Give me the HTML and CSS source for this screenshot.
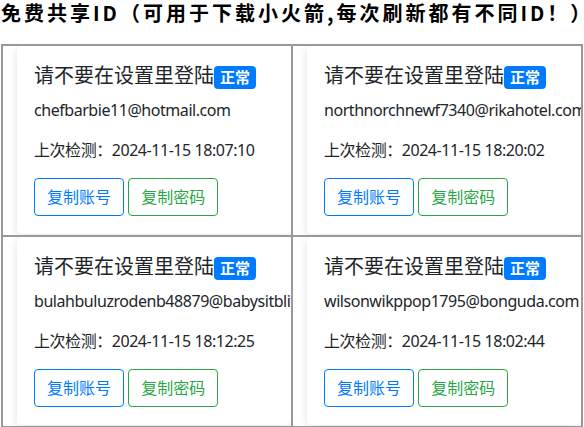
FILE: index.html
```html
<!DOCTYPE html>
<html lang="zh-CN">

<head>
    <meta charset="UTF-8">
    <meta name="viewport" content="width=device-width, initial-scale=1.0">
    <title>免费共享ID</title>

    <link rel="stylesheet" href="styles.css">
</head>

<body>
    <h3 class="page-title">免费共享ID（可用于下载小火箭,每次刷新都有不同ID！）</h3>

    <div class="id-table">
        <div class="id-cell">
            <div class="card">
                <h5 class="card-title">请不要在设置里登陆<span class="badge">正常</span></h5>
                <p class="card-text">chefbarbie11@hotmail.com</p>
                <p class="card-text">上次检测：2024-11-15 18:07:10</p>
                <button class="btn btn-blue">复制账号</button>
                <button class="btn btn-green">复制密码</button>
            </div>
        </div>
        <div class="id-cell">
            <div class="card">
                <h5 class="card-title">请不要在设置里登陆<span class="badge">正常</span></h5>
                <p class="card-text">northnorchnewf7340@rikahotel.com</p>
                <p class="card-text">上次检测：2024-11-15 18:20:02</p>
                <button class="btn btn-blue">复制账号</button>
                <button class="btn btn-green">复制密码</button>
            </div>
        </div>
        <div class="id-cell">
            <div class="card">
                <h5 class="card-title">请不要在设置里登陆<span class="badge">正常</span></h5>
                <p class="card-text">bulahbuluzrodenb48879@babysitblitz.com</p>
                <p class="card-text">上次检测：2024-11-15 18:12:25</p>
                <button class="btn btn-blue">复制账号</button>
                <button class="btn btn-green">复制密码</button>
            </div>
        </div>
        <div class="id-cell">
            <div class="card">
                <h5 class="card-title">请不要在设置里登陆<span class="badge">正常</span></h5>
                <p class="card-text">wilsonwikppop1795@bonguda.com</p>
                <p class="card-text">上次检测：2024-11-15 18:02:44</p>
                <button class="btn btn-blue">复制账号</button>
                <button class="btn btn-green">复制密码</button>
            </div>
        </div>
    </div>
</body>

</html>
```

FILE: styles.css
```css
body {
    font-family: "Noto Sans", "Noto Sans CJK SC", sans-serif;
    margin: 0;
    padding: 0 1px;
    background-color: #fff;
    color: #212529;
}

.page-title {
    font-family: "Noto Sans CJK SC", sans-serif;
    font-size: 20px;
    font-weight: 700;
    line-height: 25px;
    letter-spacing: 3px;
    white-space: nowrap;
    color: #000;
    margin: 0 0 19px;
}

.id-table {
    display: grid;
    grid-template-columns: 1fr 1fr;
    width: 580px;
    border: 1px solid #999;
}

.id-cell {
    border: 1px solid #999;
    padding: 0 0 1px 14px;
    overflow: hidden;
}

.card {
    background-color: #fff;
    padding: 18px 17px;
    border-radius: 5px;
    box-shadow: 0 2px 10px rgba(0, 0, 0, 0.12);
    overflow: hidden;
    white-space: nowrap;
}

.card-title {
    font-size: 20px;
    font-weight: 400;
    line-height: 24px;
    margin: 0 0 9px;
}

.badge {
    display: inline-block;
    font-size: 75%;
    font-weight: 700;
    line-height: 1;
    padding: 0.25em 0.4em;
    border-radius: 4px;
    color: #fff;
    background-color: #007bff;
}

.card-text {
    font-size: 16px;
    line-height: 24px;
    letter-spacing: -0.45px;
    margin: 0 0 16px;
}

.btn {
    font-family: inherit;
    font-size: 16px;
    line-height: 24px;
    padding: 6px 12px;
    background-color: #fff;
    border: 1px solid;
    border-radius: 4px;
    cursor: pointer;
}

.btn-blue {
    color: #007bff;
    border-color: #007bff;
}

.btn-green {
    color: #28a745;
    border-color: #28a745;
}
```
